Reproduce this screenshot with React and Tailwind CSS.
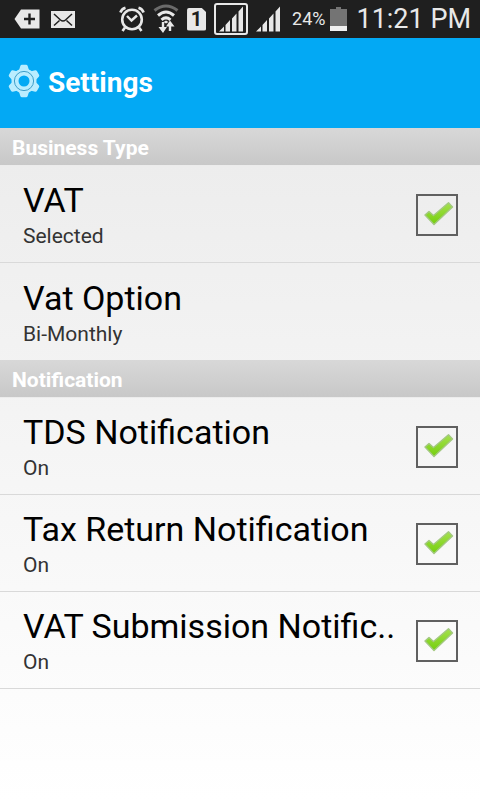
import React, { useState } from "react";

const sections = [
    {
        title: "Business Type",
        items: [
            { id: "vat", title: "VAT", on: "Selected", off: "Not selected", check: true },
            { id: "vat-option", title: "Vat Option", summary: "Bi-Monthly" },
        ],
    },
    {
        title: "Notification",
        items: [
            { id: "tds", title: "TDS Notification", on: "On", off: "Off", check: true },
            { id: "tax-return", title: "Tax Return Notification", on: "On", off: "Off", check: true },
            { id: "vat-submission", title: "VAT Submission Notific..", on: "On", off: "Off", check: true },
        ],
    },
];

function SignalBars() {
    return (
        <svg width="24" height="26" viewBox="0 0 24 26" fill="#e8e8e8" aria-hidden="true">
            <path d="M0 25.500L5 20.500V25.500ZM6.500 25.500V19L11 14V25.500ZM13 25.500V12.500L17.500 7.500V25.500ZM19.500 25.500V5.500L24 0.500V25.500Z" />
        </svg>
    );
}

function StatusBar() {
    return (
        <div className="flex h-[38px] items-center bg-[#1f1f1f] pl-[14px] pr-[9px] text-[#e8e8e8]">
            <svg width="26" height="20" viewBox="0 0 26 20" aria-hidden="true">
                <path d="M0.500 10L7 0.500H25.500V19.500H7Z" fill="#e8e8e8" />
                <path d="M15.500 4.500V15.500M10 10H21" stroke="#1f1f1f" strokeWidth="2.400" />
            </svg>
            <svg className="ml-[11px]" width="24" height="17" viewBox="0 0 24 17" aria-hidden="true">
                <path d="M0 0H24V17H0Z" fill="#e8e8e8" />
                <path d="M3 3L9.500 9Q12 11 14.500 9L21 3M3 14.500L8.500 9.500M21 14.500L15.500 9.500" fill="none" stroke="#1f1f1f" strokeWidth="1.500" />
            </svg>
            <div className="flex-1" />
            <div className="flex items-center gap-2">
                <svg width="26" height="26" viewBox="0 0 26 26" fill="none" stroke="#e8e8e8" strokeWidth="2.600" aria-hidden="true">
                    <circle cx="13" cy="13.500" r="9.800" />
                    <path d="M8 10L12.500 14.500L18 9.500" strokeWidth="2.400" />
                    <path d="M1.400 6.500Q2.500 3 6.500 1.800M24.600 6.500Q23.500 3 19.500 1.800" />
                    <path d="M6 21.500L3.500 25M20 21.500L22.500 25" />
                </svg>
                <svg width="26" height="30" viewBox="0 0 26 30" fill="none" strokeWidth="3" aria-hidden="true">
                    <path d="M1.500 6.500Q13 -2.500 24.500 6.500" stroke="#6b6b6b" />
                    <path d="M5 11.500Q13 4.500 21 11.500M8.500 15.800Q13 12 17.500 15.800" stroke="#e8e8e8" />
                    <path d="M10.500 18L13 16.500L15.500 18L13 19.500Z" fill="#e8e8e8" />
                    <path d="M10 18V25M17 27V21" stroke="#e8e8e8" strokeWidth="2.400" />
                    <path d="M5.500 23H14L10 29ZM13 22.500H21.500L17 16.500Z" fill="#e8e8e8" />
                </svg>
                <span className="flex h-[23px] w-[19px] items-center justify-center rounded-[2px] bg-[#e8e8e8] text-xl font-bold leading-none text-[#1f1f1f] [clip-path:polygon(0_0,75%_0,100%_20%,100%_100%,0_100%)]">
                    1
                </span>
                <span className="flex h-8 w-[34px] items-center justify-center rounded-[3px] border-2 border-[#e8e8e8]">
                    <SignalBars />
                </span>
                <SignalBars />
            </div>
            <span className="ml-3 text-lg leading-none">24%</span>
            <svg className="ml-[5px]" width="17" height="24" viewBox="0 0 17 24" aria-hidden="true">
                <path d="M6 0H11V2H17V19H0V2H6Z" fill="#747474" />
                <path d="M0 19H17V24H0Z" fill="#f0f0f0" />
            </svg>
            <span className="ml-[9px] text-[27px] leading-none">11:21 PM</span>
        </div>
    );
}

function GearIcon() {
    return (
        <svg width="32" height="38" viewBox="0 0 32 38" aria-hidden="true">
            <g fill="#b9edff">
                <path id="tooth" d="M10.500 8L12.300 2Q12.700 0.800 14 0.800H18Q19.300 0.800 19.700 2L21.500 8Z" />
                <use href="#tooth" transform="rotate(60 16 17)" />
                <use href="#tooth" transform="rotate(120 16 17)" />
                <use href="#tooth" transform="rotate(180 16 17)" />
                <use href="#tooth" transform="rotate(240 16 17)" />
                <use href="#tooth" transform="rotate(300 16 17)" />
            </g>
            <circle cx="16" cy="17" r="9" fill="none" stroke="#b9edff" strokeWidth="7" />
            <circle cx="16" cy="17" r="9.600" fill="none" stroke="#3f9fc9" strokeWidth="1" />
        </svg>
    );
}

function CheckMark() {
    return (
        <svg className="pointer-events-none absolute left-2 top-2" width="30" height="24" viewBox="0 0 30 24" aria-hidden="true">
            <defs>
                <linearGradient id="check-green" x1="0" y1="0" x2="0" y2="1">
                    <stop offset="0" stopColor="#a5e04f" />
                    <stop offset="1" stopColor="#74cf0c" />
                </linearGradient>
            </defs>
            <path
                d="M1 13L5 9.500L9.500 13.500L24.500 0.800L28.500 5L10 22.500Z"
                fill="url(#check-green)"
                stroke="#a3c880"
                strokeWidth="1.400"
                strokeLinejoin="round"
            />
        </svg>
    );
}

function RowText({ title, summary }) {
    return (
        <span className="min-w-0 flex-1">
            <span className="block truncate text-[34px] leading-[42px] text-black">{title}</span>
            <span className="block text-[21px] leading-[30px] text-[#333333]">{summary}</span>
        </span>
    );
}

function SettingRow({ item, last }) {
    const [checked, setChecked] = useState(true);
    const border = last ? "" : "border-b border-[#d9d9d9]";

    if (!item.check) {
        return (
            <button type="button" className={`flex h-[97px] w-full items-center px-[23px] pt-0.5 text-left ${border}`}>
                <RowText title={item.title} summary={item.summary} />
            </button>
        );
    }

    return (
        <label htmlFor={item.id} className={`flex h-[97px] items-center gap-3 pl-[23px] pr-[22px] pt-0.5 ${border}`}>
            <RowText title={item.title} summary={checked ? item.on : item.off} />
            <span className="relative size-[42px] shrink-0">
                <input
                    id={item.id}
                    type="checkbox"
                    checked={checked}
                    onChange={(e) => setChecked(e.target.checked)}
                    className="block size-full appearance-none border-2 border-[#606060]"
                />
                {checked && <CheckMark />}
            </span>
        </label>
    );
}

export default function App() {
    return (
        <div className="flex min-h-screen flex-col font-[Roboto,sans-serif]">
            <StatusBar />
            <header className="flex h-[90px] items-center gap-2 bg-[#03a9f4] px-2">
                <GearIcon />
                <h1 className="text-[28px] font-bold leading-9 text-white">Settings</h1>
            </header>
            <main className="flex-1 bg-linear-to-b from-[#ececec] to-white">
                {sections.map((section, i) => (
                    <section key={section.title}>
                        <h2 className="h-[38px] border-b border-[#ececec] bg-linear-to-b from-[#d8d8d8] to-[#c8c8c8] px-3 text-[21px] font-bold leading-[40px] text-white">
                            {section.title}
                        </h2>
                        {section.items.map((item, j) => (
                            <SettingRow
                                key={item.id}
                                item={item}
                                last={i < sections.length - 1 && j === section.items.length - 1}
                            />
                        ))}
                    </section>
                ))}
            </main>
        </div>
    );
}
